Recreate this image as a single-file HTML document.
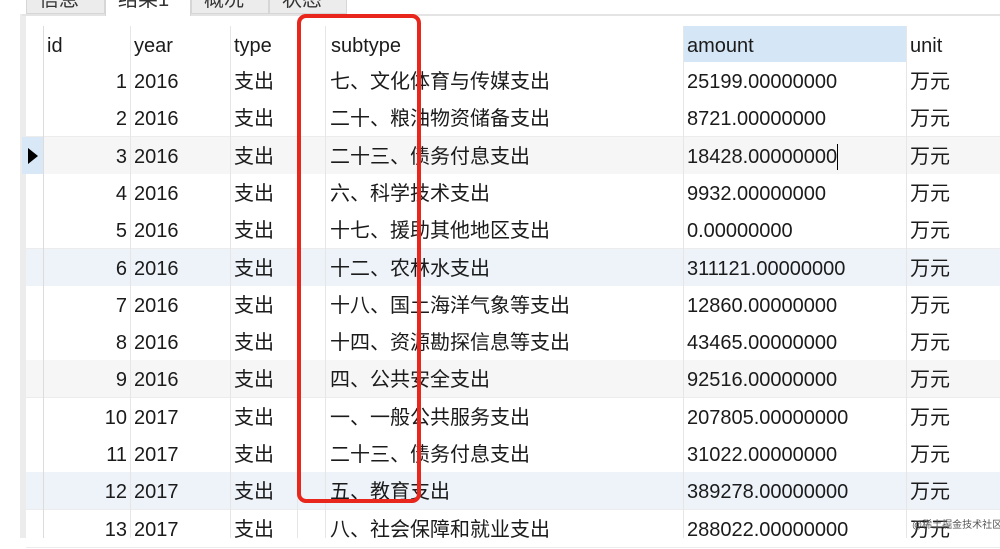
<!DOCTYPE html>
<html><head><meta charset="utf-8"><style>
body{margin:0;width:1000px;height:538px;overflow:hidden;background:#fff;font-family:"Liberation Sans","Noto Sans CJK SC",sans-serif;color:#1b1b1b;position:relative}
.a{position:absolute}
.tab{position:absolute;top:-8px;height:22px;background:#ececec;border:1px solid #d6d6d6;font-size:20px;color:#333;line-height:14px;padding-left:12px;box-sizing:border-box;overflow:hidden}
.row{position:absolute;left:26px;width:974px;height:37px;border-bottom:1px solid #ececec}
.c{position:absolute;top:2px;height:37px;line-height:37px;font-size:20px;white-space:nowrap}
.vl{position:absolute;top:26px;height:512px;width:1px;background:#e6e6e6}
</style></head><body>
<div class="a" style="left:0;top:0;width:22px;height:538px;background:#fff"></div>
<div class="a" style="left:20px;top:14px;width:6px;height:524px;background:#ececec"></div>
<div class="a" style="left:22px;top:14px;width:978px;height:2px;background:#e4e4e4"></div>
<div class="tab" style="left:26px;width:79px">信息</div>
<div class="tab" style="left:105px;width:86px;background:#fff;border-bottom:none;height:24px">结果1</div>
<div class="tab" style="left:191px;width:78px">概况</div>
<div class="tab" style="left:269px;width:78px">状态</div>
<div class="row" style="top:26px;height:36px;background:#fff;border-bottom:2px solid #e4e4e4">
<div class="c" style="left:657px;width:223px;background:#d5e6f6;top:0;height:36px"></div>
<div class="c" style="left:21px">id</div>
<div class="c" style="left:108px">year</div>
<div class="c" style="left:208px">type</div>
<div class="c" style="left:305px">subtype</div>
<div class="c" style="left:661px">amount</div>
<div class="c" style="left:884px">unit</div>
</div>
<div id="rows"></div>
<div class="vl" style="left:43px;background:#dcdcdc"></div>
<div class="vl" style="left:130px"></div>
<div class="vl" style="left:230px"></div>
<div class="vl" style="left:297px"></div>
<div class="vl" style="left:325px"></div>
<div class="vl" style="left:683px"></div>
<div class="vl" style="left:906px"></div>
<div class="a" style="left:297px;top:14px;width:124px;height:489px;border:4px solid #e8261c;border-radius:9px;box-sizing:border-box"></div>
<div class="a" style="left:912px;top:516px;font-size:10px;color:#555;white-space:nowrap">@稀土掘金技术社区</div>
<script>
var d=[[1,2016,"七、文化体育与传媒支出","25199.00000000"],[2,2016,"二十、粮油物资储备支出","8721.00000000"],[3,2016,"二十三、债务付息支出","18428.00000000"],[4,2016,"六、科学技术支出","9932.00000000"],[5,2016,"十七、援助其他地区支出","0.00000000"],[6,2016,"十二、农林水支出","311121.00000000"],[7,2016,"十八、国土海洋气象等支出","12860.00000000"],[8,2016,"十四、资源勘探信息等支出","43465.00000000"],[9,2016,"四、公共安全支出","92516.00000000"],[10,2017,"一、一般公共服务支出","207805.00000000"],[11,2017,"二十三、债务付息支出","31022.00000000"],[12,2017,"五、教育支出","389278.00000000"],[13,2017,"八、社会保障和就业支出","288022.00000000"]];
var h="";
d.forEach(function(r,i){var top=62+i*37.3;var bg=(r[0]==6||r[0]==12)?"#eef3fa":(r[0]==3||r[0]==9)?"#f6f6f6":"#fff";
h+='<div class="row" style="top:'+top+'px;background:'+bg+'">'+
'<div class="c" style="left:17px;width:84px;text-align:right">'+r[0]+'</div>'+
'<div class="c" style="left:108px">'+r[1]+'</div>'+
'<div class="c" style="left:208px">支出</div>'+
'<div class="c" style="left:304px">'+r[2]+'</div>'+
'<div class="c" style="left:661px">'+r[3]+(r[0]==3?'<span style="display:inline-block;width:1px;height:26px;background:#000;vertical-align:middle"></span>':'')+'</div>'+
'<div class="c" style="left:884px">万元</div></div>';
if(r[0]==3)h+='<div class="a" style="left:22px;top:'+top+'px;width:21px;height:37px;background:#d8e8f6"></div><div class="a" style="left:28px;top:'+(top+11)+'px;width:0;height:0;border-left:10px solid #000;border-top:8px solid transparent;border-bottom:8px solid transparent"></div>';
});
document.getElementById("rows").innerHTML=h;
</script>
</body></html>
